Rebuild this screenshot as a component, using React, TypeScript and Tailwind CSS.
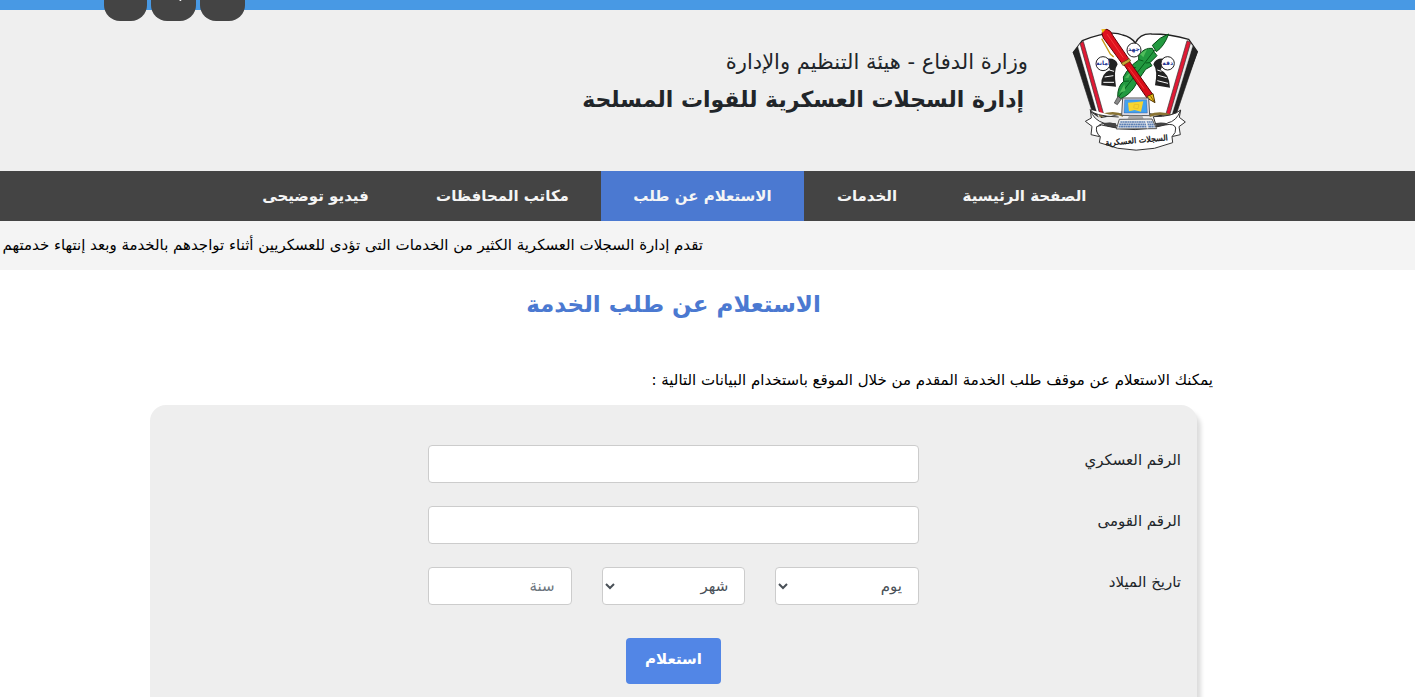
import { useState } from "react";
import { FaFacebookF, FaPhone, FaSearch } from "react-icons/fa";

const navItems = [
  { title: "الصفحة الرئيسية", width: "w-[189px]" },
  { title: "الخدمات", width: "w-[126px]" },
  { title: "الاستعلام عن طلب", width: "w-[203px]" },
  { title: "مكاتب المحافظات", width: "w-[197px]" },
  { title: "فيديو توضيحى", width: "w-[177px]" },
];

const months = ["يناير", "فبراير", "مارس", "أبريل", "مايو", "يونيو", "يوليو", "أغسطس", "سبتمبر", "أكتوبر", "نوفمبر", "ديسمبر"];

const fieldClass =
  "h-[38px] w-full min-w-0 rounded-[4px] border border-[#ccc] bg-white px-4 text-[15px] text-[#495057] placeholder:text-[#6c757d]";

const selectClass =
  "h-[38px] w-full min-w-0 rounded-[4px] border border-[#ccc] bg-white ps-3 text-[15px] text-[#495057]";

function Emblem() {
  return (
    <svg viewBox="36 24 378 372" className="h-[124px] w-[126px] shrink-0" role="img" aria-label="شعار السجلات العسكرية">
      {/* Open book */}
      <path d="M40 97 L67 62 Q150 28 188 45 Q212 50 226 69 Q240 40 275 42 Q330 42 386 58 L412 95 L337 292 L226 275 L124 292 Z" fill="#fff" stroke="#222" strokeWidth="4" />
      <path d="M40 97 L54 80 L115 291 L98 279 Z" fill="#222" stroke="#222" strokeWidth="2" />
      <path d="M54 80 L61 70 L122 290 L114 290 Z" fill="#fff" stroke="#777" strokeWidth="1" />
      <path d="M60 70 L70 64 L132 286 L121 288 Z" fill="#e01a35" stroke="#333" strokeWidth="2" />
      <path d="M412 95 L398 78 L333 290 L350 279 Z" fill="#222" stroke="#222" strokeWidth="2" />
      <path d="M398 78 L391 69 L327 288 L334 290 Z" fill="#eee" stroke="#777" strokeWidth="1" />
      <path d="M392 67 L381 62 L317 285 L328 288 Z" fill="#e01a35" stroke="#333" strokeWidth="2" />
      <path d="M118 288 Q160 272 190 287 M268 287 Q300 274 337 288" fill="none" stroke="#8a7434" strokeWidth="8" />

      {/* Film strips */}
      <path d="M138 116 Q168 112 173 133 Q160 150 168 200 L124 196 Q122 160 150 150 Z" fill="#222" />
      <path d="M134 171 L160 167 M130 187 L162 187 M148 150 L162 154" stroke="#fff" strokeWidth="3" />
      <path d="M316 116 Q286 112 280 133 Q294 151 285 196 L330 203 Q328 160 302 150 Z" fill="#222" />
      <path d="M294 166 L320 173 M292 182 L324 190 M292 150 L304 154" stroke="#fff" strokeWidth="3" />

      {/* Quill */}
      <path d="M277 85 Q254 82 236 105 L236 120 Q206 140 190 171 L191 184 Q173 198 173 230 L182 236 Q206 226 222 203 L239 174 L257 148 L276 137 L270 128 L291 107 L284 98 Z" fill="#229a40" stroke="#084b17" strokeWidth="3" />
      <path d="M326 42 Q300 50 277 76 L289 95 Q312 80 326 42 Z" fill="#229a40" stroke="#084b17" strokeWidth="3" />
      <path d="M236 119 L250 123 M213 142 L228 143 M191 184 L208 183 M270 128 L257 129 M239 174 L219 166" fill="none" stroke="#075d1c" strokeWidth="3" />
      <path d="M284 90 L174 233" stroke="#075d1c" strokeWidth="3" />
      <path d="M240 102 L261 88 L250 112 Z M195 173 L219 146 L205 174 Z M179 219 L193 192 L196 212 Z" fill="#50bd5c" />
      <path d="M174 229 L184 237 L172 254 L163 249 Z" fill="#888" stroke="#333" strokeWidth="2" />

      {/* Value medallions */}
      <g fill="#fff" stroke="#222" strokeWidth="3">
        <circle cx="129" cy="131" r="21" />
        <circle cx="222" cy="90" r="21" />
        <circle cx="323" cy="130" r="20" />
      </g>
      <g className="font-['DejaVu_Sans']" fontSize="18" fontWeight="700" textAnchor="middle" fill="#1d3391">
        <text x="129" y="136">أمانة</text>
        <text x="222" y="93">جهد</text>
        <text x="323" y="136">دقة</text>
      </g>

      {/* Fountain pen */}
      <path d="M126 42 Q127 28 141 28 Q154 32 158 46 L206 116 L187 132 L130 54 Z" fill="#df111e" stroke="#620308" strokeWidth="3" />
      <path d="M206 121 L278 223 L261 234 L191 133 Z" fill="#d90d19" stroke="#620308" strokeWidth="3" />
      <path d="M141 42 L190 113 M205 141 L252 206" fill="none" stroke="#f03a3a" strokeWidth="3" />
      <path d="M184 129 L208 116 L212 123 L189 137 Z" fill="#c6a737" stroke="#5c4212" strokeWidth="2" />
      <path d="M124 28 L138 27 L127 39 Z" fill="#efb80b" />
      <path d="M125 56 L151 102 L161 111" fill="none" stroke="#c69b1a" strokeWidth="4" />
      <path d="M262 229 L279 221 L285 248 L264 236 Z" fill="#edbf1b" stroke="#533604" strokeWidth="3" />
      <path d="M271 227 L283 246" stroke="#533604" strokeWidth="2" />

      {/* Ribbon */}
      <path d="M91 269 L94 294 L76 304 L96 319 L93 344 L119 350 L109 330 Q112 312 133 310 Q172 306 172 322 Q150 330 130 320 Q144 312 133 310 Q100 300 91 269 Q98 288 176 291" fill="#fff" stroke="#333" strokeWidth="3" />
      <path d="M362 270 Q340 290 280 290 L290 322 L345 322 L335 350 L361 344 L357 320 L376 306 L358 292 Z" fill="#fff" stroke="#333" strokeWidth="3" />
      <path d="M362 270 Q350 304 322 309" fill="none" stroke="#333" strokeWidth="3" />
      <path d="M132 310 Q148 306 168 310 L168 326 Q145 326 130 320 Z M288 309 Q305 306 323 310 L321 319 L289 326 Z" fill="#444" />
      <path d="M110 320 Q125 311 139 318 Q224 341 315 315 Q343 309 347 324 Q349 338 336 350 L338 368 Q229 413 118 368 L121 350 Q106 337 110 320 Z" fill="#fff" stroke="#333" strokeWidth="3" />
      <text x="230" y="369" className="font-['DejaVu_Sans']" fontSize="24" textAnchor="middle" fill="#111" stroke="#111" transform="rotate(-5 230 365)">السجلات العسكرية</text>

      {/* Computer */}
      <path d="M188 234 L266 234 L269 287 L185 286 Z" fill="#e4e4ea" stroke="#555" strokeWidth="3" />
      <path d="M194 239 L260 239 L262 279 L192 279 Z" fill="#42a2ef" stroke="#337" strokeWidth="1" />
      <path d="M204 248 L230 246 L250 244 L243 275 L224 270 L207 274 Z" fill="#f8d52e" />
      <path d="M223 253 L237 254 L234 266 L221 264 Z" fill="none" stroke="#e0b92a" strokeWidth="2" />
      <path d="M207 287 L247 287 L251 296 L203 296 Z" fill="#aaa" />
      <path d="M178 298 L276 297 L290 326 L169 327 Z" fill="#eee" stroke="#555" strokeWidth="3" />
      <path d="M181 306 H278 M178 313 H281 M176 320 H284" stroke="#5d80b5" strokeWidth="5" strokeDasharray="6 1" />
      <path d="M257 300 L263 325" stroke="#eee" strokeWidth="4" />
    </svg>
  );
}

export default function App() {
  const [active, setActive] = useState(2);

  return (
    <div dir="rtl" className="min-h-screen overflow-hidden bg-white font-['DejaVu_Sans',sans-serif] text-[#212529]">
      <header className="relative border-t-[10px] border-[#4899e4] bg-[#efefef]">
        <div dir="ltr" className="absolute -top-8 left-[104px] flex gap-1 text-base text-white">
          <a href="#facebook" aria-label="فيسبوك" className="flex h-[43px] w-[43px] justify-center rounded-2xl bg-[#444] pt-1">
            <FaFacebookF />
          </a>
          <a href="#search" aria-label="بحث" className="flex h-[43px] w-[45px] justify-center rounded-2xl bg-[#444] pt-[7px]">
            <FaSearch />
          </a>
          <a href="#contact" aria-label="اتصل بنا" className="flex h-[43px] w-[45px] justify-center rounded-2xl bg-[#444] pt-1">
            <FaPhone />
          </a>
        </div>
        <div className="flex h-[161px] items-start gap-11 ps-[217px] pt-[18px]">
          <Emblem />
          <div className="pt-4 whitespace-nowrap">
            <p className="text-[21px] leading-9">وزارة الدفاع - هيئة التنظيم والإدارة</p>
            <h1 className="ps-1 text-[22px] leading-10 font-bold">إدارة السجلات العسكرية للقوات المسلحة</h1>
          </div>
        </div>
      </header>

      <nav className="bg-[#444] pe-[227px] ps-[296px]">
        <ul className="flex h-[50px]">
          {navItems.map((item, index) => (
            <li key={item.title} className={item.width}>
              <a
                href="#"
                onClick={() => setActive(index)}
                className={`flex h-full items-center justify-center text-[15px] font-bold whitespace-nowrap text-[#f5f5f5] ${active === index ? "bg-[#4b79d1]" : ""}`}
              >
                {item.title}
              </a>
            </li>
          ))}
        </ul>
      </nav>

      <div className="flex h-[49px] items-center overflow-hidden bg-[#f4f4f4] ps-[712px] text-[15px] whitespace-nowrap text-black">
        <p>تقدم إدارة السجلات العسكرية الكثير من الخدمات التى تؤدى للعسكريين أثناء تواجدهم بالخدمة وبعد إنتهاء خدمتهم</p>
      </div>

      <main className="pe-[134px] ps-[202px]">
        <h2 className="pt-4 text-center text-[23px] leading-9 font-bold text-[#4b79d1]">الاستعلام عن طلب الخدمة</h2>
        <p className="pt-12 text-[15px] leading-5 text-black">يمكنك الاستعلام عن موقف طلب الخدمة المقدم من خلال الموقع باستخدام البيانات التالية :</p>

        <form
          onSubmit={(e) => e.preventDefault()}
          className="mx-4 mt-[15px] rounded-t-[16px] bg-[#eee] px-4 pt-10 pb-4 shadow-[4px_6px_4px_#ddd]"
        >
          <div className="grid grid-cols-[1fr_491px_1fr] gap-y-[23px] text-[15px]">
            <label htmlFor="military" className="pt-1">الرقم العسكري</label>
            <input id="military" type="text" className={fieldClass} />
            <span />

            <label htmlFor="national" className="pt-1">الرقم القومى</label>
            <input id="national" type="text" className={fieldClass} />
            <span />

            <label htmlFor="day" className="pt-1">تاريخ الميلاد</label>
            <div className="grid grid-cols-3 gap-[30px]">
              <select id="day" className={selectClass} defaultValue="">
                <option value="">يوم</option>
                {Array.from({ length: 31 }, (_, i) => (
                  <option key={i} value={i + 1}>{i + 1}</option>
                ))}
              </select>
              <select aria-label="شهر" className={selectClass} defaultValue="">
                <option value="">شهر</option>
                {months.map((month) => (
                  <option key={month} value={month}>{month}</option>
                ))}
              </select>
              <input type="text" aria-label="سنة" placeholder="سنة" className={fieldClass} />
            </div>
            <span />
          </div>
          <div className="mt-[33px] flex justify-center">
            <button type="submit" className="h-[46px] w-[95px] rounded-[4px] bg-[#5286e6] pb-1 text-[15px] font-bold text-white">
              استعلام
            </button>
          </div>
        </form>
      </main>
    </div>
  );
}
